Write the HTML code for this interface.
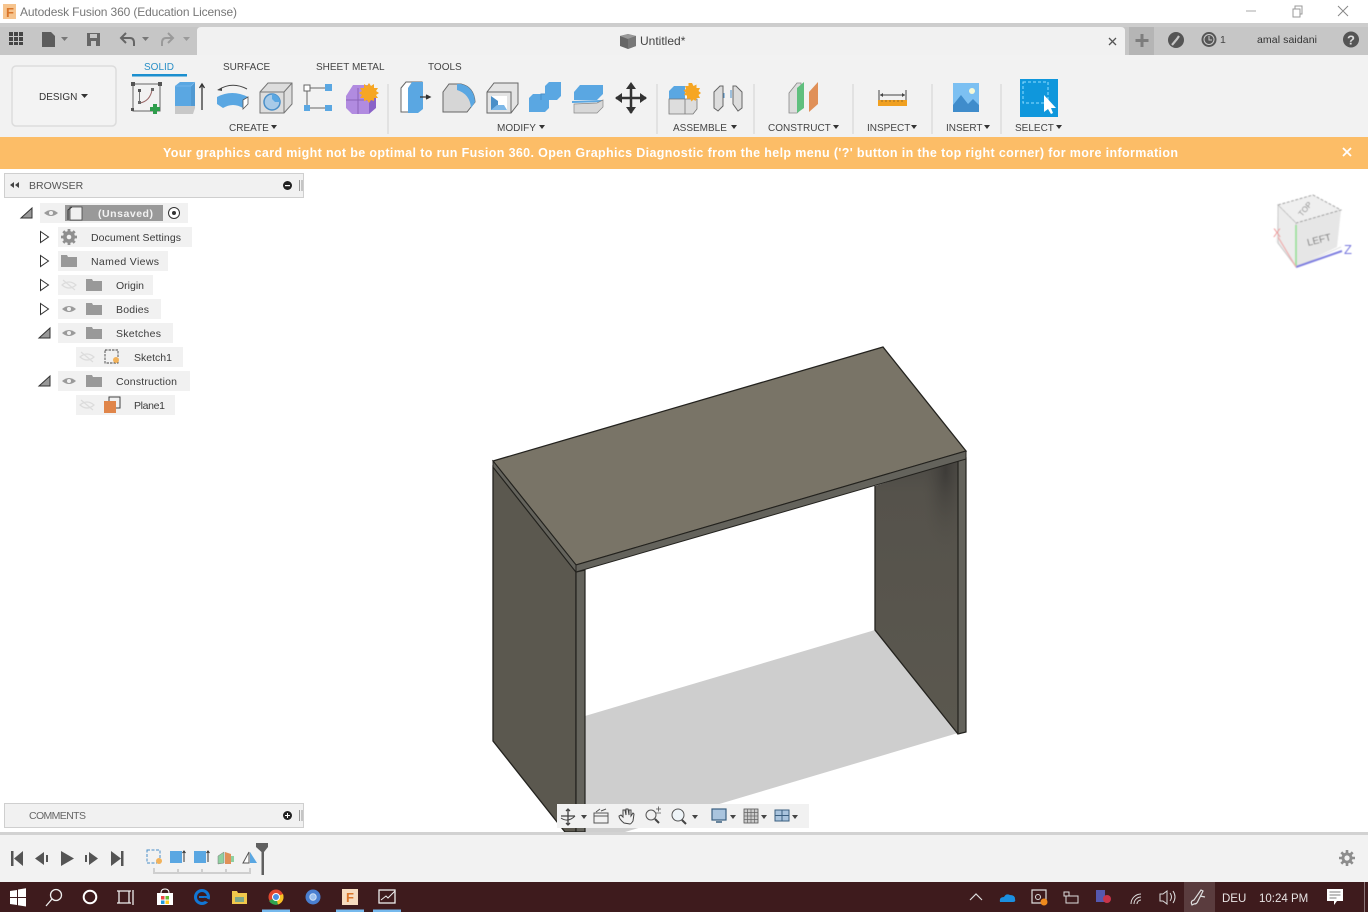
<!DOCTYPE html>
<html><head><meta charset="utf-8"><title>Autodesk Fusion 360</title>
<style>
html,body{margin:0;padding:0;background:#fff;width:1368px;height:912px;overflow:hidden}
svg{display:block;position:absolute;left:0;top:0}
text{font-family:"Liberation Sans",sans-serif;font-size:10.5px;fill:#3c3c3c}
.t{fill:#444;font-size:10px}
.ar{fill:#333}
</style></head><body>
<svg width="1368" height="912" viewBox="0 0 1368 912" xmlns="http://www.w3.org/2000/svg">
<defs>
<linearGradient id="bk" x1="0" y1="0" x2="0" y2="1"><stop offset="0" stop-color="#4c4a45"/><stop offset=".12" stop-color="#55524b"/><stop offset="1" stop-color="#5b584f"/></linearGradient>
<radialGradient id="bk2" cx=".85" cy=".04" r=".32"><stop offset="0" stop-color="#3a3835" stop-opacity=".85"/><stop offset="1" stop-color="#55524b" stop-opacity="0"/></radialGradient>
<filter id="soft" x="-10%" y="-10%" width="120%" height="120%"><feGaussianBlur stdDeviation=".6"/></filter>
</defs>
<!-- title bar -->
<rect x="0" y="0" width="1368" height="23" fill="#fff"/>
<rect x="3" y="4" width="13" height="15" fill="#f6c48e"/>
<text x="6" y="17" style="font-size:13px;font-weight:bold;fill:#d9762b">F</text>
<text x="20" y="16" textLength="217" style="font-size:12px;fill:#777">Autodesk Fusion 360 (Education License)</text>
<path d="M1246 11h10" stroke="#aaa" stroke-width="1"/>
<path d="M1293 9h7v8h-7zM1295 9V6h7v8h-2" fill="none" stroke="#999" stroke-width="1"/>
<path d="M1338 6l10 10M1348 6l-10 10" stroke="#888" stroke-width="1"/>
<!-- top gray row -->
<rect x="0" y="23" width="1368" height="4" fill="#cdcdcd"/>
<rect x="0" y="27" width="1368" height="28" fill="#c6c6c6"/>
<path d="M197 55V31q0-4 4-4H1121q4 0 4 4V55z" fill="#f1f1f1"/>
<rect x="1129" y="27" width="25" height="28" fill="#b5b5b5"/>
<!-- quick access -->
<g fill="#444"><rect x="9" y="32" width="4" height="4"/><rect x="14" y="32" width="4" height="4"/><rect x="19" y="32" width="4" height="4"/><rect x="9" y="37" width="4" height="4"/><rect x="14" y="37" width="4" height="4"/><rect x="19" y="37" width="4" height="4"/><rect x="9" y="42" width="4" height="3"/><rect x="14" y="42" width="4" height="3"/><rect x="19" y="42" width="4" height="3"/></g>
<path d="M42 32h9l4 4v11H42z" fill="#5c5c5c"/>
<path d="M61 37h7l-3.500 4z" fill="#777"/>
<path d="M87 33h13v13H87z" fill="#666"/><rect x="90" y="34" width="7" height="4" fill="#c6c6c6"/><rect x="91" y="41" width="5" height="5" fill="#c6c6c6"/>
<path d="M126 33l-5 5 5 5M121 38h9q4 0 4 5v3" fill="none" stroke="#666" stroke-width="2"/>
<path d="M142 37h7l-3.500 4z" fill="#777"/>
<path d="M168 33l5 5-5 5M173 38h-7q-4 0-4 5v3" fill="none" stroke="#9a9a9a" stroke-width="2"/>
<path d="M183 37h7l-3.500 4z" fill="#9a9a9a"/>
<!-- doc title -->
<path d="M620 36l8-2 8 2v10l-8 3-8-3z" fill="#666"/><path d="M620 36l8 3 8-3-8-2z" fill="#999"/><path d="M628 39v10l8-3V36z" fill="#777"/>
<text x="640" y="45" style="font-size:12px;fill:#444">Untitled*</text>
<path d="M1109 38l7 7M1116 38l-7 7" stroke="#555" stroke-width="1.300"/>
<path d="M1142 34v13M1135.500 40.500h13" stroke="#7d7d7d" stroke-width="3"/>
<circle cx="1176" cy="40" r="8" fill="#555"/><path d="M1172 45l5-6 2-3" stroke="#c6c6c6" stroke-width="2.200" fill="none"/>
<circle cx="1209" cy="39.500" r="7.500" fill="#555"/><circle cx="1209" cy="39.500" r="5" fill="none" stroke="#ccc" stroke-width="1"/><path d="M1209 36v4h3" stroke="#ccc" fill="none"/>
<text x="1220" y="43" style="font-size:10.500px;fill:#444">1</text>
<text x="1257" y="43" textLength="60" style="font-size:10.500px;fill:#333">amal saidani</text>
<circle cx="1351" cy="39.500" r="8" fill="#555"/><text x="1347" y="44.500" style="font-size:13px;font-weight:bold;fill:#ddd">?</text>
<!-- ribbon -->
<rect x="0" y="55" width="1368" height="82" fill="#f2f2f2"/>
<rect x="12" y="66" width="104" height="60" rx="4" fill="#f3f3f3" stroke="#dcdcdc" stroke-width="1.500"/>
<text x="39" y="100" style="font-size:10px;fill:#333">DESIGN</text><path class="ar" d="M81 94h7l-3.500 4z"/>
<text x="144" y="70" style="font-size:10px;fill:#2a8fc6">SOLID</text>
<rect x="132" y="74" width="55" height="2.500" fill="#1b8fcf"/>
<text x="223" y="70" class="t">SURFACE</text>
<text x="316" y="70" class="t">SHEET METAL</text>
<text x="428" y="70" class="t">TOOLS</text>
<!-- create icons -->
<rect x="133" y="84" width="27" height="27" fill="none" stroke="#666" stroke-width="1"/>
<g fill="#555"><rect x="131" y="82" width="4" height="4"/><rect x="158" y="82" width="4" height="4"/><rect x="131" y="108" width="3" height="3"/><rect x="138" y="89" width="3" height="3"/></g>
<path d="M140 103q10-2 12-13" fill="none" stroke="#996666" stroke-width="1"/><path d="M139.500 92v9" stroke="#777"/><rect x="138" y="101" width="3" height="3" fill="#666"/><rect x="151" y="88" width="3" height="3" fill="#666"/>
<path d="M155 104v10M150 109h10" stroke="#2e9d4c" stroke-width="4"/>
<path d="M175 86l5-4h15v24h-20z" fill="#5aa7e2"/><path d="M175 106h20v2l-2 6h-18z" fill="#c8c8c8"/><path d="M195 82v24l-4 0v-20z" fill="#4a8fc8" opacity=".6"/><path d="M175 86h16l4-4" fill="none" stroke="#7dbcee" stroke-width=".8"/>
<path d="M202 110V85M199.500 88l2.500-4 2.500 4" stroke="#333" stroke-width="1.300" fill="none"/>
<path d="M217 97q15-8 31 0v7l-5 4q-10-6-20 0l-6-4z" fill="#5aa7e2"/><path d="M243 100l5-3v7l-5 5z" fill="#fff" stroke="#555" stroke-width=".8"/><path d="M218 90q14-9 29-1" fill="none" stroke="#444"/><path d="M217 90l5-2v3z" fill="#444"/>
<path d="M260 92l8-9h24v21l-8 9h-24z" fill="#ddd" stroke="#777"/><path d="M260 92h24v21M284 92l8-9" fill="none" stroke="#777"/><circle cx="272" cy="102" r="8" fill="#a9cbe8" stroke="#4a8fc8" stroke-width="1.500"/><path d="M272 94a8 8 0 0 1 8 8h-5l-3-3z" fill="#5aa7e2"/>
<rect x="304" y="85" width="6" height="6" fill="#fff" stroke="#666"/><rect x="325" y="84" width="7" height="7" fill="#5aa7e2"/><rect x="304" y="105" width="6" height="6" fill="#5aa7e2"/><rect x="325" y="105" width="7" height="6" fill="#5aa7e2"/>
<path d="M310 88h15M307 91v14M310 108h15" stroke="#666" stroke-width="1"/>
<path d="M346 96l7-11h16l7 6v16l-7 7h-17l-6-6z" fill="#b18be0"/><path d="M346 100h24M358 88v26" stroke="#8a63b8" stroke-width="1"/><path d="M369 97l7-3v14l-7 6z" fill="#8a63c8"/>
<path d="M369 83l2 3 3-2 0 4 4 0-2 3 3 2-3 2 2 3-4 0 0 3-3-1-2 3-2-3-3 1 0-3-4 0 2-3-3-2 3-2-2-3 4 0 0-4 3 2z" fill="#f6a623"/>
<text x="229" y="131" class="t">CREATE</text><path class="ar" d="M271 125h6l-3 4z"/>
<path d="M388 84v50" stroke="#ddd" stroke-width="1.500"/>
<!-- modify icons -->
<path d="M401 88l5-6h16v27l-5 3h-16z" fill="#fff" stroke="#666"/><path d="M408 88l4-6h11v27l-5 4h-10z" fill="#5aa7e2"/><path d="M420 97h9M426 95l4 2-4 2" stroke="#333" stroke-width="1.300" fill="#333"/>
<path d="M443 112V92l6-8h12q13 3 14 18l-8 10z" fill="#d6d6d6" stroke="#666"/><path d="M457 84h4q13 3 14 18l-4 6q-1-14-14-18z" fill="#5aa7e2"/>
<path d="M487 92l7-9h24v21l-7 9h-24z" fill="#e4e4e4" stroke="#666"/><path d="M487 92h24v21" fill="none" stroke="#666"/><rect x="491" y="96" width="16" height="14" fill="#fff"/><path d="M491 96l7 5v9h-7z" fill="#4a8fc8"/><path d="M491 110h16l-3-5h-7z" fill="#7db8e8"/>
<path d="M529 98l4-4h12v-8l4-4h12v14l-4 4h-8v8l-4 4h-16z" fill="#5aa7e2"/><path d="M541 100v-6h4" fill="none" stroke="#4a8fc8"/>
<path d="M574 92l6-7h23v9l-6 6h-23z" fill="#5aa7e2"/><path d="M572 101l30-1 0 2-30 1z" fill="#5aa7e2"/><path d="M574 104l23-1 6-3v7l-6 6h-23z" fill="#d8d8d8" stroke="#888" stroke-width=".7"/>
<path d="M631 84v29M616 98h30" stroke="#333" stroke-width="2.500"/><path d="M631 82l-5 7h10zM631 114l-5-7h10zM615 98l7-5v10zM647 98l-7-5v10z" fill="#333"/>
<text x="497" y="131" class="t">MODIFY</text><path class="ar" d="M539 125h6l-3 4z"/>
<path d="M657 84v50" stroke="#ddd" stroke-width="1.500"/>
<!-- assemble -->
<path d="M669 91l5-5h11v13h-16z" fill="#5aa7e2"/><path d="M669 99h16v15h-16zM685 99h12v10l-4 5h-8z" fill="#ddd" stroke="#777" stroke-width=".8"/>
<path d="M692 83l1.500 3 3-1.500 0 3.500 3.500 0-1.500 3 2.500 2-2.500 2 1.500 3-3.500 0-1 3-2-1.500-2 2-1.500-3-3 .5 0-3.500-3-.5 1.500-2.500-2-2 2.500-1.500-1-3 3.500 0 0-3z" fill="#f6a623"/>
<path d="M714 92l6-6h3v20l-5 5-4-3zM742 92l-6-6h-3v18l5 7 4-3z" fill="#ddd" stroke="#666"/><path d="M724 93v5M731 90v8" stroke="#4a8fc8"/>
<text x="673" y="131" class="t">ASSEMBLE</text><path class="ar" d="M731 125h6l-3 4z"/>
<path d="M754 84v50" stroke="#ddd" stroke-width="1.500"/>
<!-- construct -->
<path d="M789 93l8-10h4v26l-4 4h-8z" fill="#ddd" stroke="#888" stroke-width=".8"/><path d="M797 88l7-6v26l-7 5z" fill="#5fbf7e"/><path d="M809 92l9-10v22l-9 8z" fill="#e09058"/>
<text x="768" y="131" class="t">CONSTRUCT</text><path class="ar" d="M833 125h6l-3 4z"/>
<path d="M853 84v50" stroke="#ddd" stroke-width="1.500"/>
<!-- inspect -->
<rect x="878" y="100" width="29" height="6" fill="#f0a020"/><path d="M879 90v10M906 90v10" stroke="#444"/><path d="M880 95h25" stroke="#444"/><path d="M880 95l3-2v4zM905 95l-3-2v4z" fill="#444"/><path d="M882 100v2M886 100v2M890 100v2M894 100v2M898 100v2M902 100v2" stroke="#886020" stroke-width=".8"/>
<text x="867" y="131" class="t">INSPECT</text><path class="ar" d="M911 125h6l-3 4z"/>
<path d="M932 84v50" stroke="#ddd" stroke-width="1.500"/>
<!-- insert -->
<rect x="953" y="83" width="26" height="29" fill="#7cc0f2"/><circle cx="972" cy="91" r="3" fill="#f4f8d8"/><path d="M953 112V105l8-10 7 9 5-5 6 6v7z" fill="#3f8ccb"/>
<text x="946" y="131" class="t">INSERT</text><path class="ar" d="M984 125h6l-3 4z"/>
<path d="M1001 84v50" stroke="#ddd" stroke-width="1.500"/>
<!-- select -->
<rect x="1020" y="79" width="38" height="38" fill="#0f97dc"/><rect x="1023" y="82" width="25" height="21" fill="none" stroke="#8fdcff" stroke-width="1" stroke-dasharray="3 2"/>
<path d="M1044 95v17l4-3 3 5 2-1-2-5 5 0z" fill="#fff"/>
<text x="1015" y="131" class="t">SELECT</text><path class="ar" d="M1056 125h6l-3 4z"/>
<!-- banner -->
<rect x="0" y="137" width="1368" height="32" fill="#fcbd67"/>
<text x="163" y="157" textLength="1015" style="font-size:12.500px;font-weight:bold;fill:#fff">Your graphics card might not be optimal to run Fusion 360. Open Graphics Diagnostic from the help menu ('?' button in the top right corner) for more information</text>
<path d="M1343 148l8 8M1351 148l-8 8" stroke="#fff" stroke-width="1.800"/>
<!-- model -->
<path d="M585 716L875 630L958 733L625 832H585z" fill="#cecece"/>
<path d="M875 486L958 460V734L875 630z" fill="url(#bk)"/>
<path d="M875 486L958 460V734L875 630z" fill="url(#bk2)"/>
<path d="M875 486V630L958 734" fill="none" stroke="#23221e" stroke-width="1.300"/>
<path d="M958 460L966 458V732L958 734z" fill="#64635c" stroke="#23221e" stroke-width="1.200"/>
<path d="M493 467L576 572V832H565L493 741z" fill="#5b584f" stroke="#23221e" stroke-width="1.300"/>
<path d="M576 572L585 570V832H576z" fill="#64635c" stroke="#23221e" stroke-width="1.200"/>
<path d="M493 461L883 347L966 451L576 565z" fill="#797467" stroke="#23221e" stroke-width="1.300"/>
<path d="M493 461L576 565V572L493 467z" fill="#64635c" stroke="#23221e" stroke-width="1"/>
<path d="M576 565L966 451V459L576 572z" fill="#64635c" stroke="#23221e" stroke-width="1"/>
<!-- view cube -->
<g filter="url(#soft)">
<path d="M1278 205l35-10 28 15-5 35-40 22-20-25z" fill="#f2f2f2"/>
<path d="M1296 223l45-13-4 37-41 20z" fill="#e6e6e6"/>
<path d="M1278 205l35-10 28 15-45 13z" fill="#efefef" stroke="#888" stroke-width=".8" stroke-dasharray="3 1.500"/>
<path d="M1278 205l18 18v44l-18-24z" fill="#ececec" stroke="#bbb" stroke-width=".7"/>
<path d="M1296 223v44l45-20" fill="none" stroke="#ccc" stroke-width=".6"/>
<text transform="translate(1308 246) rotate(-14)" style="font-size:10px;fill:#777">LEFT</text>
<text transform="translate(1302 217) rotate(-50)" style="font-size:8px;fill:#888">TOP</text>
<path d="M1296 267V225" stroke="#9ae09a" stroke-width="1.800"/>
<path d="M1296 267l46-16" stroke="#8080e0" stroke-width="2"/>
<path d="M1296 267l-18-30" stroke="#eeb0b0" stroke-width="1.300"/>
<text x="1344" y="254" style="font-size:13px;fill:#7777dd">Z</text>
<text x="1273" y="237" style="font-size:12px;fill:#e99">X</text>
</g>
<!-- browser -->
<rect x="4.500" y="173.500" width="299" height="24" fill="#f1f1f1" stroke="#cfcfcf"/>
<path d="M14 182v6l-4-3zM19 182v6l-4-3z" fill="#444"/>
<text x="29" y="189" style="font-size:10.500px;fill:#555">BROWSER</text>
<circle cx="287.500" cy="185.500" r="4.500" fill="#222"/><rect x="285" y="185" width="5" height="1.200" fill="#fff"/>
<path d="M299.500 180v11M302 180v11" stroke="#999"/>
<!-- tree rows -->
<g fill="#f1f1f1">
<rect x="40" y="203" width="148" height="20"/>
<rect x="58" y="227" width="134" height="20"/>
<rect x="58" y="251" width="110" height="20"/>
<rect x="58" y="275" width="95" height="20"/>
<rect x="58" y="299" width="103" height="20"/>
<rect x="58" y="323" width="115" height="20"/>
<rect x="76" y="347" width="107" height="20"/>
<rect x="58" y="371" width="132" height="20"/>
<rect x="76" y="395" width="99" height="20"/>
</g>
<rect x="65" y="205" width="98" height="16" fill="#999"/>
<path d="M70 207h12v13H70z" fill="#f0f0f0" stroke="#444" stroke-width=".8"/><path d="M72 207l-4 3v10" fill="none" stroke="#333"/>
<text x="98" y="217" textLength="55" style="font-size:10.500px;font-weight:bold;fill:#f2f2f2">(Unsaved)</text>
<circle cx="174" cy="213" r="5.500" fill="#fff" stroke="#333"/><circle cx="174" cy="213" r="2" fill="#333"/>
<!-- triangles -->
<g fill="#fff" stroke="#333" stroke-width="1">
<path d="M21 218L32 208V218z" fill="#999"/>
<path d="M40.500 231.500l8 5.500-8 5.500z"/><path d="M40.500 255.500l8 5.500-8 5.500z"/><path d="M40.500 279.500l8 5.500-8 5.500z"/><path d="M40.500 303.500l8 5.500-8 5.500z"/>
<path d="M39 338L50 328V338z" fill="#999"/><path d="M39 386L50 376V386z" fill="#999"/>
</g>
<!-- eyes -->
<g>
<path d="M44 213q7-6 14 0q-7 6-14 0z" fill="#9a9a9a"/><circle cx="51" cy="213" r="2" fill="#f1f1f1"/>
<path d="M62 309q7-6 14 0q-7 6-14 0z" fill="#9a9a9a"/><circle cx="69" cy="309" r="2" fill="#f1f1f1"/>
<path d="M62 333q7-6 14 0q-7 6-14 0z" fill="#9a9a9a"/><circle cx="69" cy="333" r="2" fill="#f1f1f1"/>
<path d="M62 381q7-6 14 0q-7 6-14 0z" fill="#9a9a9a"/><circle cx="69" cy="381" r="2" fill="#f1f1f1"/>
<g fill="none" stroke="#dcdcdc" stroke-width="1.200"><path d="M62 285q7-6 14 0q-7 6-14 0zM63 280l12 10"/><path d="M80 357q7-6 14 0q-7 6-14 0zM81 352l12 10"/><path d="M80 405q7-6 14 0q-7 6-14 0zM81 400l12 10"/></g>
</g>
<!-- gear -->
<path d="M69 229v16M61 237h16M63.300 231.300l11.400 11.400M74.700 231.300l-11.400 11.400" stroke="#8f8f8f" stroke-width="2.800"/><circle cx="69" cy="237" r="6" fill="#8f8f8f"/><circle cx="69" cy="237" r="2.300" fill="#f1f1f1"/>
<!-- folders -->
<g fill="#999"><path d="M61 255h6l1 2h9v10H61z"/><path d="M86 279h6l1 2h9v10H86z"/><path d="M86 303h6l1 2h9v10H86z"/><path d="M86 327h6l1 2h9v10H86z"/><path d="M86 375h6l1 2h9v10H86z"/></g>
<rect x="105" y="350" width="13" height="13" fill="none" stroke="#444" stroke-width=".9" stroke-dasharray="2.500 1"/><circle cx="116" cy="360" r="3" fill="#f2b25a"/>
<rect x="109" y="397" width="11" height="11" fill="none" stroke="#444"/><rect x="104" y="401" width="12" height="12" fill="#e0854a"/>
<g>
<text x="91" y="241" textLength="90">Document Settings</text>
<text x="91" y="265" textLength="68">Named Views</text>
<text x="116" y="289" textLength="28">Origin</text>
<text x="116" y="313" textLength="33">Bodies</text>
<text x="116" y="337" textLength="45">Sketches</text>
<text x="134" y="361" textLength="38">Sketch1</text>
<text x="116" y="385" textLength="61">Construction</text>
<text x="134" y="409" textLength="31">Plane1</text>
</g>
<!-- comments -->
<rect x="4.500" y="803.500" width="299" height="24" fill="#f1f1f1" stroke="#cfcfcf"/>
<text x="29" y="819" textLength="57" style="font-size:10.500px;fill:#666">COMMENTS</text>
<circle cx="287.500" cy="815.500" r="4.500" fill="#222"/><path d="M285 815.500h5M287.500 813v5" stroke="#fff" stroke-width="1"/>
<path d="M299.500 810v11M302 810v11" stroke="#999"/>
<!-- view toolbar -->
<rect x="557" y="804" width="252" height="24" fill="#f1f1f1"/>
<g fill="none" stroke="#444" stroke-width="1">
<path d="M568 809v15M561 816h14M566 811l2-2 2 2M566 823l2 2 2-2" stroke-width="1.300"/><path d="M561 818q7 5 14-2"/>
<rect x="594" y="813" width="14" height="10" stroke="#555"/><path d="M594 816h14M596 812l4-3M601 811l5-2" stroke="#555"/>
<path d="M624 823q-5-4-5-7l2-1 2 2v-7l2 0 1 5v-6h2l1 6v-5l2 0v6l2-3 1 1-1 7q-2 3-3 3z" stroke="#444"/>
<circle cx="651" cy="815" r="5" stroke="#555"/><path d="M655 819l4 4" stroke="#444" stroke-width="2"/><path d="M656 809h5M658.500 806.500v5M656 813h5" stroke="#555" stroke-width=".8"/>
<circle cx="678" cy="815" r="6" stroke="#555" fill="#eef4f8"/><path d="M682 820l4 4" stroke="#444" stroke-width="2"/>
</g>
<path d="M581 815h6l-3 4zM692 815h6l-3 4zM730 815h6l-3 4zM761 815h6l-3 4zM792 815h6l-3 4z" fill="#444"/>
<rect x="712" y="809" width="14" height="11" fill="#a9c4de" stroke="#3a5f80" stroke-width="1.200"/><path d="M716 822h6" stroke="#3a5f80" stroke-width="1.500"/>
<rect x="744" y="809" width="14" height="14" fill="#ccc" stroke="#555" stroke-width=".8"/><path d="M744 812.500h14M744 816h14M744 819.500h14M747.500 809v14M751 809v14M754.500 809v14" stroke="#666" stroke-width=".7"/>
<rect x="775" y="810" width="14" height="11" fill="#a9c4de" stroke="#3a5f80"/><path d="M782 810v11M775 815.500h14" stroke="#3a5f80"/>
<!-- timeline -->
<rect x="0" y="832" width="1368" height="3" fill="#d2d2d2"/>
<rect x="0" y="835" width="1368" height="47" fill="#f2f2f2"/>
<g fill="#555">
<path d="M11 851h2.500v15H11zM23 851v15l-9-7.500z"/>
<path d="M44 852v13l-9-6.500zM46 855h2v7h-2z"/>
<path d="M61 851l13 7.500-13 7.500z"/>
<path d="M85 855h2v7h-2zM89 852v13l9-6.500z"/>
<path d="M111 851l10 7.500-10 7.500zM121 851h2.500v15H121z"/>
</g>
<rect x="147" y="850" width="13" height="13" fill="none" stroke="#4a8fc8" stroke-dasharray="3 1.500"/><circle cx="159" cy="861" r="3" fill="#f2b25a"/>
<path d="M170 851h12v12h-12z" fill="#5aa7e2"/><path d="M184 862v-11M182.500 853l1.500-2 1.500 2" stroke="#333" fill="none"/>
<path d="M194 851h12v12h-12z" fill="#5aa7e2"/><path d="M208 862v-11M206.500 853l1.500-2 1.500 2" stroke="#333" fill="none"/>
<path d="M218 856l6-4v11l-6 1z" fill="#8fd0a0" stroke="#777" stroke-width=".5"/><path d="M225 852l6 2v10h-6z" fill="#e09058"/><path d="M231 856h3v6h-3z" fill="#8fd0a0"/>
<path d="M243 863l6-11v11z" fill="#fff" stroke="#555"/><path d="M250 852l7 11h-7z" fill="#5aa7e2"/>
<path d="M154 868v5h96v-5M178 869v4M202 869v4M226 869v4" fill="none" stroke="#cfcfcf" stroke-width="2"/>
<path d="M256 843h12v4l-4 5v23h-2.500V852l-5.500-5z" fill="#606060"/>
<g transform="translate(1347 858)"><path d="M0-8V8M-8 0H8M-5.700-5.700L5.700 5.700M5.700-5.700L-5.700 5.700" stroke="#8d8d8d" stroke-width="2.600"/><circle r="5.500" fill="#8d8d8d"/><circle r="2.600" fill="#f2f2f2"/></g>
<!-- taskbar -->
<rect x="0" y="882" width="1368" height="30" fill="#3e1b1d"/>
<rect x="1184" y="882" width="31" height="30" fill="#5a3c3e"/>
<g fill="#fff"><path d="M10 891l7-1v7h-7zM18 889.500l8-1.300V897h-8zM10 898h7v7l-7-1zM18 898h8v8.500l-8-1.300z"/></g>
<circle cx="56" cy="895" r="5.500" fill="none" stroke="#eee" stroke-width="1.300"/><path d="M52 899l-6 7" stroke="#eee" stroke-width="1.300"/>
<circle cx="90" cy="897" r="6.300" fill="none" stroke="#fff" stroke-width="2"/>
<path d="M119 891h10v12h-10zM117 891h14M117 903h14" fill="none" stroke="#eee" stroke-width="1.300"/><path d="M133 890v15" stroke="#eee" stroke-width="1.300"/>
<path d="M157 893h16v12h-16z" fill="#fff"/><path d="M161 893q0-4 4-4t4 4" fill="none" stroke="#fff"/><rect x="161" y="896" width="3.500" height="3.500" fill="#e44"/><rect x="165.500" y="896" width="3.500" height="3.500" fill="#6b3"/><rect x="161" y="900.500" width="3.500" height="3.500" fill="#29d"/><rect x="165.500" y="900.500" width="3.500" height="3.500" fill="#fc2"/>
<circle cx="202" cy="897" r="6.500" fill="none" stroke="#1277d4" stroke-width="3"/><path d="M199 897h8" stroke="#1277d4" stroke-width="2"/><path d="M204 899l5 2" stroke="#3e1b1d" stroke-width="3"/>
<path d="M232 891h5l1 2h9v11h-15z" fill="#f0c84c"/><rect x="235" y="897" width="9" height="5" fill="#7da88a"/>
<circle cx="276" cy="897" r="7.500" fill="#e0472f"/><path d="M276 897L269 901a8 8 0 0 0 9 3.500z" fill="#2fa44f"/><path d="M276 897l7-3a8 8 0 0 1-5 10.500z" fill="#f7c325"/><circle cx="276" cy="897" r="3.500" fill="#4a90e2" stroke="#fff"/>
<circle cx="313" cy="897" r="7.500" fill="#4a7fd0"/><circle cx="313" cy="897" r="3.200" fill="#9cc0ee" stroke="#cfe0f5"/>
<rect x="342" y="889" width="16" height="16" fill="#f6dcc0"/><text x="346" y="902" style="font-size:13px;font-weight:bold;fill:#d9762b">F</text>
<rect x="379" y="890" width="16" height="13" fill="none" stroke="#eee" stroke-width="1.300"/><path d="M381 900l5-4 2 2 7-7" fill="none" stroke="#eee"/>
<rect x="262" y="909.500" width="28" height="2.500" fill="#76b9ed"/>
<rect x="336" y="909.500" width="28" height="2.500" fill="#76b9ed"/>
<rect x="373" y="909.500" width="28" height="2.500" fill="#76b9ed"/>
<!-- tray -->
<path d="M970 900l6-6 6 6" fill="none" stroke="#ddd" stroke-width="1.200"/>
<path d="M1000 902q-1-5 4-5 2-4 6-2 5 0 5 4 1 3-2 3z" fill="#1b8fe0"/>
<path d="M1032 890h14v13h-14z" fill="none" stroke="#ddd" stroke-width="1.200"/><circle cx="1038" cy="897" r="2.500" fill="none" stroke="#ddd"/><circle cx="1044" cy="902" r="3.500" fill="#f08a1d"/>
<rect x="1066" y="896" width="12" height="7" fill="none" stroke="#ddd"/><rect x="1064" y="892" width="5" height="4" fill="none" stroke="#ddd"/>
<rect x="1096" y="890" width="9" height="12" fill="#5558af"/><circle cx="1107" cy="899" r="4" fill="#c8344a"/>
<path d="M1131 904a10 10 0 0 1 10-10M1134 904a7 7 0 0 1 7-7M1137 904a4 4 0 0 1 4-4" fill="none" stroke="#ddd" stroke-width="1"/>
<path d="M1160 894h3l4-3v13l-4-3h-3z" fill="none" stroke="#ddd"/><path d="M1170 893q3 4 0 8M1173 891q4 6 0 12" fill="none" stroke="#ddd"/>
<path d="M1192 905q-2-4 2-5l7-10 2 1-5 10q-1 3-4 3zM1200 896l5 1" fill="none" stroke="#ddd" stroke-width="1.200"/>
<text x="1222" y="902" style="font-size:11.500px;fill:#e8e4e4">DEU</text>
<text x="1259" y="902" style="font-size:11.500px;fill:#e8e4e4">10:24 PM</text>
<path d="M1327 889h16v12h-6l-3 4v-4h-7z" fill="#fff"/><path d="M1329.500 892h11M1329.500 895h11M1329.500 898h7" stroke="#555" stroke-width=".8"/>
<rect x="1364" y="882" width="1" height="30" fill="#8a7577"/>
</svg>
</body></html>
